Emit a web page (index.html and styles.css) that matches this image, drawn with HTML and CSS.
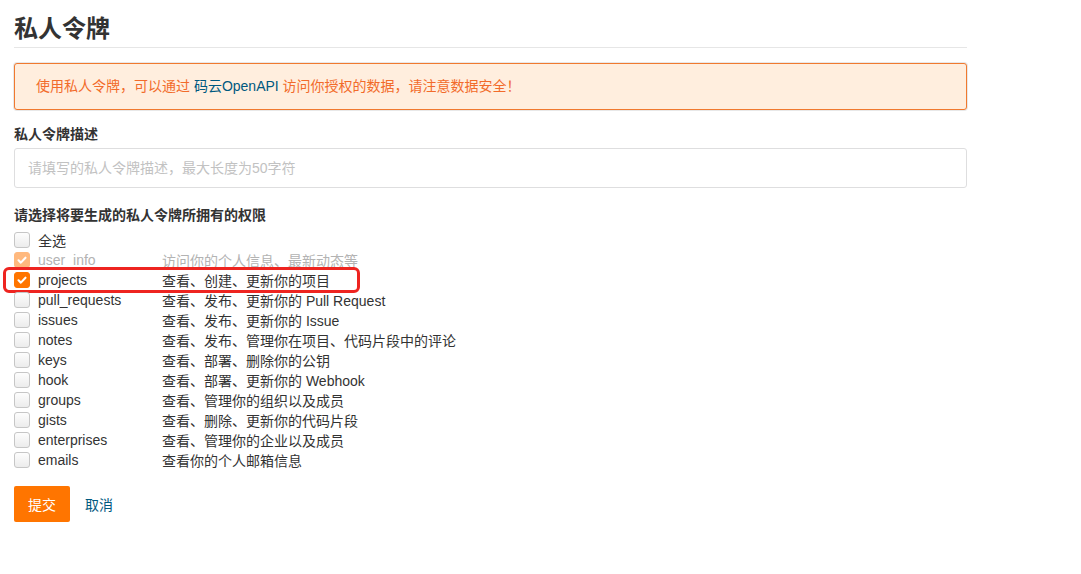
FILE: index.html
```html
<!DOCTYPE html>
<html lang="zh-CN">
<head>
    <meta charset="UTF-8">
    <title>私人令牌</title>
    <link rel="stylesheet" href="styles.css">
</head>
<body>
    <div class="page">
        <h1 class="page-title">私人令牌</h1>

        <div class="tip">
            使用私人令牌，可以通过 <a href="#" class="tip-link">码云OpenAPI</a> 访问你授权的数据，请注意数据安全！
        </div>

        <form class="token-form">
            <label class="field-label">私人令牌描述</label>
            <input type="text" class="field-input" placeholder="请填写的私人令牌描述，最大长度为50字符">

            <label class="field-label scope-label">请选择将要生成的私人令牌所拥有的权限</label>
            <ul class="scopes">
                <li class="scope">
                    <span class="box"></span><span class="scope-name">全选</span>
                </li>
                <li class="scope disabled">
                    <span class="box checked"><svg viewBox="0 0 16 16"><path d="M4 8.4l2.7 2.6L12 5.4"/></svg></span>
                    <span class="scope-name">user_info</span><span class="scope-desc">访问你的个人信息、最新动态等</span>
                </li>
                <li class="scope marked">
                    <span class="box checked"><svg viewBox="0 0 16 16"><path d="M4 8.4l2.7 2.6L12 5.4"/></svg></span>
                    <span class="scope-name">projects</span><span class="scope-desc">查看、创建、更新你的项目</span>
                </li>
                <li class="scope">
                    <span class="box"></span><span class="scope-name">pull_requests</span><span class="scope-desc">查看、发布、更新你的 Pull Request</span>
                </li>
                <li class="scope">
                    <span class="box"></span><span class="scope-name">issues</span><span class="scope-desc">查看、发布、更新你的 Issue</span>
                </li>
                <li class="scope">
                    <span class="box"></span><span class="scope-name">notes</span><span class="scope-desc">查看、发布、管理你在项目、代码片段中的评论</span>
                </li>
                <li class="scope">
                    <span class="box"></span><span class="scope-name">keys</span><span class="scope-desc">查看、部署、删除你的公钥</span>
                </li>
                <li class="scope">
                    <span class="box"></span><span class="scope-name">hook</span><span class="scope-desc">查看、部署、更新你的 Webhook</span>
                </li>
                <li class="scope">
                    <span class="box"></span><span class="scope-name">groups</span><span class="scope-desc">查看、管理你的组织以及成员</span>
                </li>
                <li class="scope">
                    <span class="box"></span><span class="scope-name">gists</span><span class="scope-desc">查看、删除、更新你的代码片段</span>
                </li>
                <li class="scope">
                    <span class="box"></span><span class="scope-name">enterprises</span><span class="scope-desc">查看、管理你的企业以及成员</span>
                </li>
                <li class="scope">
                    <span class="box"></span><span class="scope-name">emails</span><span class="scope-desc">查看你的个人邮箱信息</span>
                </li>
            </ul>

            <div class="actions">
                <button type="button" class="btn-submit">提交</button>
                <a href="#" class="btn-cancel">取消</a>
            </div>
        </form>
    </div>
</body>
</html>
```

FILE: styles.css
```css
/* 基础 */
body {
    margin: 0;
    background: #fff;
    color: #333;
    font-family: "Liberation Sans", "Noto Sans CJK SC", sans-serif;
    font-size: 14px;
    text-spacing-trim: space-all;
}

.page {
    width: 953px;
    padding: 13px 0 0 14px;
}

.page-title {
    margin: 0;
    font-size: 24px;
    line-height: 32px;
    font-weight: bold;
    color: #333;
    padding-bottom: 2px;
    border-bottom: 1px solid #e6e6e6;
}

/* 提示框 */
.tip {
    margin-top: 15px;
    background: #ffeede;
    border: 1px solid #f0792f;
    border-radius: 3px;
    box-shadow: 0 0 0 1px #e8e8e8;
    color: #f26b2a;
    line-height: 45px;
    padding: 0 21px;
}

.tip-link {
    color: #005980;
    text-decoration: none;
}

/* 表单 */
.token-form {
    display: flex;
    flex-direction: column;
}

.field-label {
    margin-top: 14px;
    line-height: 20px;
    font-weight: bold;
    color: #333;
}

.field-input {
    margin: 4px 0 0;
    height: 40px;
    box-sizing: border-box;
    border: 1px solid #dededf;
    border-radius: 3px;
    padding: 0 13px;
    font-family: inherit;
    font-size: 14px;
    color: #333;
    outline: none;
}

.field-input::placeholder {
    color: #c2c2c2;
}

.scope-label {
    margin-top: 17px;
}

/* 权限列表 */
.scopes {
    list-style: none;
    margin: 5px 0 0;
    padding: 0;
}

.scope {
    position: relative;
    display: flex;
    align-items: center;
    height: 20px;
    color: #333;
}

.box {
    width: 16px;
    height: 16px;
    box-sizing: border-box;
    border: 1px solid #c6c6c6;
    border-radius: 3px;
    background: linear-gradient(#fdfdfd, #ececec);
    margin-right: 8px;
    flex-shrink: 0;
}

.box.checked {
    background: #ff7500;
    border-color: #ff7500;
}

.box svg {
    display: block;
    width: 14px;
    height: 14px;
    fill: none;
    stroke: #fff;
    stroke-width: 2.4;
    stroke-linecap: round;
    stroke-linejoin: round;
}

.scope-name {
    width: 124px;
}

.scope.disabled {
    color: #b3b3b3;
}

.scope.disabled .box {
    opacity: 0.5;
}

/* 标注框 */
.scope.marked::after {
    content: "";
    position: absolute;
    left: -11px;
    top: -3px;
    width: 351px;
    height: 20px;
    border: 3px solid #ee2420;
    border-radius: 6px;
}

/* 按钮 */
.actions {
    display: flex;
    align-items: center;
    gap: 15px;
    margin-top: 16px;
}

.btn-submit {
    width: 56px;
    height: 36px;
    border: none;
    border-radius: 2px;
    background: #ff7500;
    color: #fff;
    font-family: inherit;
    font-size: 14px;
    cursor: pointer;
}

.btn-cancel {
    color: #005980;
    text-decoration: none;
}
```
